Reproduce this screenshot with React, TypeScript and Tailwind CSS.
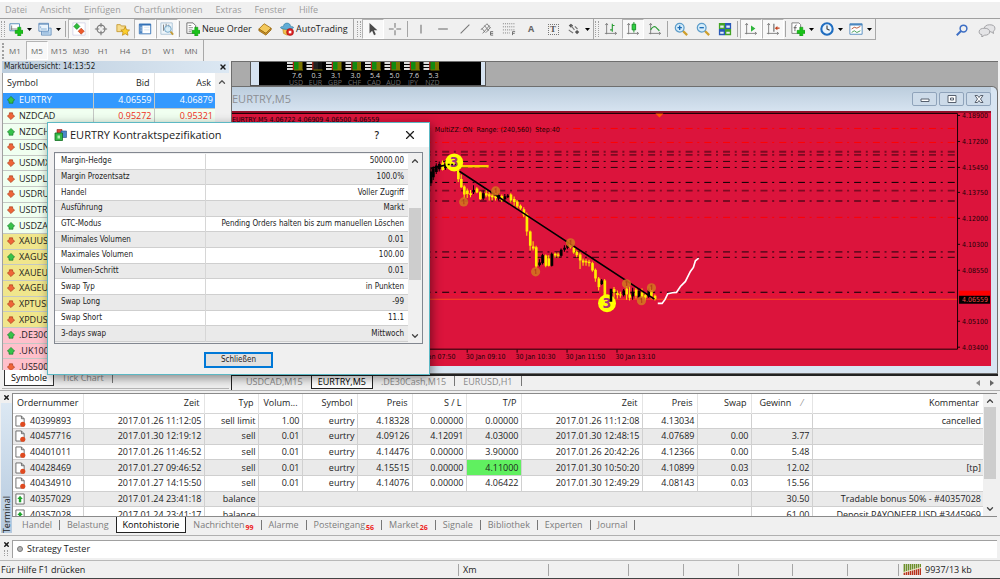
import type { ReactNode } from "react";
import clsx from "clsx";
import { ChevronDown, ChevronUp, X } from "lucide-react";

const menuItems = ["Datei", "Ansicht", "Einfügen", "Chartfunktionen", "Extras", "Fenster", "Hilfe"];

const timeframes = ["M1", "M5", "M15", "M30", "H1", "H4", "D1", "W1", "MN"];

type Quote = { symbol: string; up: boolean; bid?: string; ask?: string; tone: string };

const quotes: Quote[] = [
  { symbol: "EURTRY", up: true, bid: "4.06559", ask: "4.06879", tone: "bg-[#3399ff] text-white" },
  { symbol: "NZDCAD", up: false, bid: "0.95272", ask: "0.95321", tone: "bg-[#f0fff0]" },
  { symbol: "NZDCHF", up: true, tone: "bg-[#f0fff0]" },
  { symbol: "USDCNH", up: false, tone: "bg-[#f0fff0]" },
  { symbol: "USDMXN", up: false, tone: "bg-[#f0fff0]" },
  { symbol: "USDPLN", up: false, tone: "bg-[#f0fff0]" },
  { symbol: "USDRUB", up: false, tone: "bg-[#f0fff0]" },
  { symbol: "USDTRY", up: false, tone: "bg-[#f0fff0]" },
  { symbol: "USDZAR", up: true, tone: "bg-[#f0fff0]" },
  { symbol: "XAUUSD", up: false, tone: "bg-[#f0e68c]" },
  { symbol: "XAGUSD", up: true, tone: "bg-[#f0e68c]" },
  { symbol: "XAUEUR", up: false, tone: "bg-[#f0e68c]" },
  { symbol: "XAGEUR", up: false, tone: "bg-[#f0e68c]" },
  { symbol: "XPTUSD", up: false, tone: "bg-[#f0e68c]" },
  { symbol: "XPDUSD", up: false, tone: "bg-[#f0e68c]" },
  { symbol: ".DE30Cash", up: true, tone: "bg-[#ffc0cb]" },
  { symbol: ".UK100Cash", up: true, tone: "bg-[#ffc0cb]" },
  { symbol: ".US500Cash", up: false, tone: "bg-[#ffc0cb]" },
];

const specs: [string, string][] = [
  ["Margin-Hedge", "50000.00"],
  ["Margin Prozentsatz", "100.0%"],
  ["Handel", "Voller Zugriff"],
  ["Ausführung", "Markt"],
  ["GTC-Modus", "Pending Orders halten bis zum manuellen Löschen"],
  ["Minimales Volumen", "0.01"],
  ["Maximales Volumen", "100.00"],
  ["Volumen-Schritt", "0.01"],
  ["Swap Typ", "in Punkten"],
  ["Swap Long", "-99"],
  ["Swap Short", "11.1"],
  ["3-days swap", "Mittwoch"],
];

const orders = [
  ["40399893", "2017.01.26 11:12:05", "sell limit", "1.00", "eurtry", "4.18328", "0.00000", "0.00000", "2017.01.26 11:12:08", "4.13034", "", "", "cancelled"],
  ["40457716", "2017.01.30 12:19:12", "sell", "0.01", "eurtry", "4.09126", "4.12091", "4.03000", "2017.01.30 12:48:15", "4.07689", "0.00", "3.77", ""],
  ["40401011", "2017.01.26 11:46:52", "sell", "0.01", "eurtry", "4.14476", "0.00000", "3.90000", "2017.01.26 20:42:26", "4.12366", "0.00", "5.48", ""],
  ["40428469", "2017.01.27 09:46:52", "sell", "0.01", "eurtry", "4.15515", "0.00000", "4.11000", "2017.01.30 10:50:20", "4.10899", "0.03", "12.02", "[tp]"],
  ["40434910", "2017.01.27 14:15:50", "sell", "0.01", "eurtry", "4.14076", "0.00000", "4.06422", "2017.01.30 12:49:29", "4.08143", "0.03", "15.56", ""],
];

const balances = [
  ["40357029", "2017.01.24 23:41:18", "30.50", "Tradable bonus 50% - #40357028"],
  ["40357028", "2017.01.24 23:41:17", "61.00", "Deposit PAYONEER USD #3445969"],
];

const orderColumns = [
  { title: "Ordernummer", width: "w-[70px]", align: "text-left" },
  { title: "Zeit", width: "w-[121px]", align: "text-right" },
  { title: "Typ", width: "w-[54px]", align: "text-right" },
  { title: "Volum...", width: "w-[44px]", align: "text-right" },
  { title: "Symbol", width: "w-[55px]", align: "text-right" },
  { title: "Preis", width: "w-[55px]", align: "text-right" },
  { title: "S / L", width: "w-[54px]", align: "text-right" },
  { title: "T/P", width: "w-[55px]", align: "text-right" },
  { title: "Zeit", width: "w-[121px]", align: "text-right" },
  { title: "Preis", width: "w-[55px]", align: "text-right" },
  { title: "Swap", width: "w-[54px]", align: "text-right" },
  { title: "Gewinn", width: "w-[61px]", align: "text-left" },
  { title: "Kommentar", width: "w-auto", align: "text-right" },
];

const terminalTabs = [
  { label: "Handel" },
  { label: "Belastung" },
  { label: "Kontohistorie" },
  { label: "Nachrichten", count: "99" },
  { label: "Alarme" },
  { label: "Posteingang", count: "56" },
  { label: "Market", count: "26" },
  { label: "Signale" },
  { label: "Bibliothek" },
  { label: "Experten" },
  { label: "Journal" },
];

const strengths: [string, string][] = [
  ["7.6", "USD"],
  ["0.3", "EUR"],
  ["3.1", "GBP"],
  ["3.0", "CHF"],
  ["5.4", "CAD"],
  ["5.0", "AUD"],
  ["7.6", "JPY"],
  ["5.3", "NZD"],
];

const priceLabels: [string, number][] = [
  ["4.18900", 115],
  ["4.17200", 141],
  ["4.15450", 167],
  ["4.13750", 192],
  ["4.12000", 218],
  ["4.10300", 244],
  ["4.08550", 270],
  ["4.05100", 321],
  ["4.03400", 347],
];

// y, colour, thickness
const levels: [number, string, number][] = [
  [128.5, "#ff0000", 1],
  [142.5, "#ff0000", 1],
  [151.8, "#7d0a22", 1.8],
  [154.9, "#7d0a22", 1.8],
  [161.5, "#2a040b", 1],
  [167.5, "#2a040b", 1],
  [182.5, "#000000", 1],
  [190.8, "#7d0a22", 1.8],
  [201.1, "#55071a", 1.4],
  [217.5, "#ff0000", 1],
  [252, "#6b0920", 1.7],
  [257.5, "#2a040b", 1],
  [292.5, "#000000", 1],
];

// x, high, low, body top, body bottom, bullish
const candles: [number, number, number, number, number, boolean][] = [
  [0, 205, 258, 215, 250, true],
  [7, 200, 240, 206, 232, true],
  [16, 190, 222, 197, 216, true],
  [25, 185, 215, 192, 208, true],
  [35, 182, 212, 188, 210, false],
  [44, 180, 210, 190, 204, true],
  [53, 178, 205, 188, 200, false],
  [62, 176, 204, 186, 198, true],
  [82, 205, 246, 212, 238, false],
  [91, 224, 264, 237, 262, false],
  [100, 256, 310, 260, 284, false],
  [109, 266, 294, 272, 282, false],
  [119, 270, 292, 280, 285, false],
  [128, 256, 282, 270, 277, true],
  [138, 262, 280, 266, 278, false],
  [148, 274, 300, 277, 297, false],
  [157, 272, 300, 280, 296, true],
  [166, 268, 292, 280, 287, false],
  [175, 276, 302, 283, 290, false],
  [184, 278, 302, 287, 292, false],
  [194, 268, 302, 288, 295, false],
  [203, 280, 302, 285, 296, true],
  [213, 284, 306, 288, 302, false],
  [222, 282, 305, 289, 298, true],
  [231, 282, 294, 287, 292, true],
  [240, 280, 308, 284, 302, false],
  [250, 290, 318, 297, 306, false],
  [259, 300, 326, 305, 320, false],
  [269, 314, 330, 318, 326, false],
  [279, 322, 352, 328, 346, false],
  [288, 338, 408, 343, 395, false],
  [298, 392, 452, 395, 438, false],
  [307, 424, 452, 440, 446, false],
  [316, 438, 518, 442, 500, false],
  [326, 478, 500, 488, 496, true],
  [335, 462, 494, 466, 490, true],
  [345, 464, 502, 467, 498, false],
  [354, 466, 500, 476, 498, false],
  [363, 458, 500, 462, 498, true],
  [373, 458, 474, 462, 467, false],
  [382, 458, 474, 464, 468, false],
  [391, 446, 472, 450, 468, true],
  [401, 436, 456, 444, 450, true],
  [410, 430, 448, 436, 444, true],
  [419, 426, 446, 430, 442, false],
  [429, 440, 462, 444, 458, false],
  [438, 452, 472, 456, 466, false],
  [448, 458, 508, 464, 482, false],
  [457, 476, 498, 482, 488, false],
  [466, 478, 498, 484, 488, false],
  [475, 480, 500, 486, 490, false],
  [485, 486, 516, 490, 512, false],
  [494, 506, 546, 510, 536, false],
  [504, 532, 572, 536, 562, false],
  [513, 538, 556, 542, 553, true],
  [522, 538, 602, 542, 592, false],
  [550, 562, 594, 568, 578, false],
  [560, 572, 596, 580, 586, false],
  [569, 576, 594, 584, 587, false],
  [579, 568, 590, 572, 586, true],
  [588, 556, 600, 566, 584, false],
  [597, 560, 602, 584, 594, false],
  [606, 564, 600, 576, 590, true],
  [616, 564, 596, 570, 588, false],
  [625, 566, 600, 574, 594, true],
  [634, 566, 604, 578, 598, false],
  [644, 580, 602, 586, 594, false],
  [654, 566, 594, 572, 590, true],
  [662, 560, 596, 568, 590, false],
  [673, 584, 602, 588, 598, false],
];

const swings: [number, number][] = [
  [463, 202],
  [495, 191],
  [535, 272],
  [570, 243],
  [626, 284],
  [641, 301],
  [651, 288],
];

function Caret() {
  return (
    <svg viewBox="0 0 5 3" className="h-[3px] w-[5px] shrink-0" aria-hidden="true">
      <path d="M0 0h5L2.5 3z" />
    </svg>
  );
}

function Icon({ children }: { children: ReactNode }) {
  return (
    <svg viewBox="0 0 16 16" className="size-3.5 shrink-0" fill="none" aria-hidden="true">
      {children}
    </svg>
  );
}

function GreenPlus() {
  return <path d="M10 6h3.5v3.500H16V13h-2.500v3H10v-3H7V9.500h3z" fill="#19c219" stroke="#0b8d0b" strokeWidth=".6" />;
}

function Axes() {
  return <path d="M3 2v12M1 13h13M1.500 3.500 3 1.500l1.500 2M12.500 11.500l2 1.500-2 1.500" stroke="#777" />;
}

const icons = {
  newChart: (
    <Icon>
      <path d="M1 2h11v8H1z" fill="#fff" stroke="#4a86b5" />
      <path d="M3 4v5M2 8h8" stroke="#777" />
      <GreenPlus />
    </Icon>
  ),
  profiles: (
    <Icon>
      <path d="M4 7h11v8H4z" fill="#c4dcf2" stroke="#6a92bd" />
      <path d="M1 1.500h11v9H1z" fill="#eaf4fc" stroke="#5b88b8" />
      <path d="M1 2.500h11" stroke="#5b88b8" />
      <path d="M3 8h7M5 12.500h8M3 5v2" stroke="#7fa8d0" />
    </Icon>
  ),
  market: (
    <Icon>
      <path d="M1 1h14v14H1z" fill="#fff" stroke="#bbd" strokeWidth=".6" />
      <path d="M5.500 1.500 9 5 5.500 8.500 2 5z" fill="#2ebd3a" stroke="#14761c" strokeWidth=".6" />
      <path d="M10.500 7 14 10.500 10.500 14 7 10.500z" fill="#ee5a2c" stroke="#a8320e" strokeWidth=".6" />
    </Icon>
  ),
  target: (
    <Icon>
      <circle cx="8" cy="8" r="4.500" stroke="#777" strokeWidth="1.300" />
      <path d="M8 1v5M8 10v5M1 8h5M10 8h5" stroke="#777" strokeWidth="1.200" />
    </Icon>
  ),
  navigator: (
    <Icon>
      <path d="M1 3h4l1 1.500h5V11H1z" fill="#f7dc8c" stroke="#c69a32" />
      <path
        d="m10.500 5.500 1.600 3.300 3.400.4-2.500 2.400.7 3.600-3.200-1.800-3.200 1.800.7-3.600-2.500-2.400 3.400-.4z"
        fill="#fccf2e"
        stroke="#b98412"
        strokeWidth=".8"
      />
    </Icon>
  ),
  terminal: (
    <Icon>
      <path d="M1.500 2.500h13v11h-13z" fill="#fff" stroke="#2f6eb5" />
      <path d="M1.500 3h13" stroke="#2f6eb5" strokeWidth="2" />
      <path d="M2 3h3v10H2z" fill="#4d86c4" />
      <path d="M3 6h1M3 8h1M3 10h1" stroke="#fff" />
      <path d="M7 6h6M7 9h6" stroke="#d6e2ee" />
    </Icon>
  ),
  tester: (
    <Icon>
      <path d="M1 1h13v13H1z" fill="#eef5fa" stroke="#a9c2d6" />
      <path d="M4 3v7M7 2v5M10 3v4" stroke="#777" />
      <circle cx="9" cy="8" r="3.800" fill="#d5edf9" fillOpacity=".8" stroke="#6a9fc4" />
      <path d="m12 11 3 3.500" stroke="#c59b35" strokeWidth="2" />
    </Icon>
  ),
  order: (
    <Icon>
      <path d="M1 1h7l3 3v9H1z" fill="#fff" stroke="#666" />
      <path d="M3 4h3M3 6.500h5M3 9h4M3 11h3" stroke="#888" />
      <GreenPlus />
    </Icon>
  ),
  book: (
    <Icon>
      <path d="M1 8 7 2l8 5-6 6z" fill="#f3c95c" stroke="#a87415" />
      <path d="M1 8v2l8 5 6-6V7l-6 6z" fill="#cf9526" stroke="#8b5f10" strokeWidth=".8" />
    </Icon>
  ),
  auto: (
    <Icon>
      <path d="M3 7h10l-1 6-4 2-4-2z" fill="#f3c24e" stroke="#b98a21" strokeWidth=".7" />
      <path d="M4 5c0-5 8-5 8 0 3 0 4 1 3 2-4 2-10 2-14 0-1-1 0-2 3-2z" fill="#61add6" stroke="#2b789f" strokeWidth=".7" />
      <circle cx="11.500" cy="11.500" r="4" fill="#dc2020" stroke="#9a0d0d" strokeWidth=".6" />
      <path d="M10 10h3v3h-3z" fill="#fff" />
    </Icon>
  ),
  cursor: (
    <Icon>
      <path d="M4 1v12l3-3 2.200 5 2-1L9 9.500h4z" fill="#4a4a4a" />
    </Icon>
  ),
  cross: (
    <Icon>
      <path d="M8 1v5.500M8 9.500V15M1 8h5.500M9.500 8H15" stroke="#777" strokeWidth="1.200" />
    </Icon>
  ),
  vertical: (
    <Icon>
      <path d="M8 3v10" stroke="#777" strokeWidth="1.300" />
    </Icon>
  ),
  horizontal: (
    <Icon>
      <path d="M2.500 8h11" stroke="#777" strokeWidth="1.300" />
    </Icon>
  ),
  trend: (
    <Icon>
      <path d="M3 13 13 3" stroke="#777" strokeWidth="1.300" />
    </Icon>
  ),
  channel: (
    <Icon>
      <path d="m1 9 7-7M3 13l8-9M7 12l5-6M2 7l4 5M5 4l5 6M8 2l4 5" stroke="#777" />
      <path d="M15 11h-3v4h3M12 13h3" stroke="#666" />
    </Icon>
  ),
  fibo: (
    <Icon>
      <path d="M1 2h14M1 5.500h14M1 9h14M1 12.500h8" stroke="#777" strokeDasharray="1.200 1.200" />
      <path d="M12 15v-4h3M12 13h2.500" stroke="#666" />
    </Icon>
  ),
  arrows: (
    <Icon>
      <path d="m2 4 2.500-2L7 4 4.500 6.500zM9 11.500l2.500-2.500 2.500 2.500-2.500 2.500z" fill="#555" />
      <path d="m4.500 4 4 5M9 5l3 3M2 9l2 1.500 3 2" stroke="#777" strokeWidth="1.300" />
    </Icon>
  ),
  bars: (
    <Icon>
      <Axes />
      <path d="M9.500 2v9M9.500 4H12M7 9h2.500" stroke="#2a9c35" strokeWidth="1.300" />
    </Icon>
  ),
  candle: (
    <Icon>
      <Axes />
      <path d="M9 0v12" stroke="#128d20" />
      <path d="M7 2.500h4V9H7z" fill="#2fd042" stroke="#128d20" />
    </Icon>
  ),
  line: (
    <Icon>
      <Axes />
      <path d="M3 9c2-4 5-5 7-2l3 3" stroke="#2a9c35" strokeWidth="1.300" />
    </Icon>
  ),
  zoomIn: (
    <Icon>
      <path d="m10 10 5 5" stroke="#cf9f2c" strokeWidth="2.600" />
      <circle cx="6.500" cy="6.500" r="5" fill="#d4ecfa" stroke="#5c9cc9" strokeWidth="1.400" />
      <path d="M6.500 4v5M4 6.500h5" stroke="#1c6bb5" strokeWidth="1.500" />
    </Icon>
  ),
  zoomOut: (
    <Icon>
      <path d="m10 10 5 5" stroke="#cf9f2c" strokeWidth="2.600" />
      <circle cx="6.500" cy="6.500" r="5" fill="#d4ecfa" stroke="#5c9cc9" strokeWidth="1.400" />
      <path d="M4 6.500h5" stroke="#1c6bb5" strokeWidth="1.500" />
    </Icon>
  ),
  tiles: (
    <Icon>
      <path d="M1 1h7v7H1zM8 8h7v7H8z" fill="#44a325" />
      <path d="M8 1h7v7H8zM1 8h7v7H1z" fill="#2859b8" />
      <path d="M2.500 4h4v2.500h-4zM9.500 4h4v2.500h-4zM2.500 11h4v2.500h-4zM9.500 11h4v2.500h-4z" fill="#e6eef8" />
    </Icon>
  ),
  scroll: (
    <Icon>
      <Axes />
      <path d="M8 4v7l5-3.500z" fill="#2fb53c" />
    </Icon>
  ),
  shift: (
    <Icon>
      <Axes />
      <path d="M9 2v9" stroke="#666" strokeWidth="1.300" />
      <path d="m10 7 3-2.500v1.800h2.500v1.400H13v1.800z" fill="#c5401b" />
    </Icon>
  ),
  indicators: (
    <Icon>
      <path d="M1 1h8l2 2v10H1z" fill="#fff" stroke="#777" />
      <path d="M6.500 3.500c-2 0-2 1-2 7M3 6.500h3.500" stroke="#555" />
      <GreenPlus />
    </Icon>
  ),
  clock: (
    <Icon>
      <circle cx="8" cy="8" r="6.500" fill="#e9f4fd" stroke="#1f6dc0" strokeWidth="2.400" />
      <path d="M8 4v4l3 1.500" stroke="#333" strokeWidth="1.200" />
    </Icon>
  ),
  templates: (
    <Icon>
      <path d="M1 2h14v12H1z" fill="#fff" stroke="#4b87be" />
      <path d="M1 3h14" stroke="#4b87be" strokeWidth="2" />
      <path d="m3 8 3-2 3 1 4-2" stroke="#b34a2a" />
      <path d="m3 12 3-2 3 2 4-2" stroke="#319243" />
    </Icon>
  ),
};

type ToolProps = { label: string; icon: ReactNode; pressed?: boolean; menu?: boolean };

function Tool({ label, icon, pressed, menu }: ToolProps) {
  return (
    <button
      type="button"
      aria-label={label}
      aria-pressed={pressed}
      className={clsx(
        "flex h-5 shrink-0 items-center justify-center gap-1",
        menu ? "w-[29px]" : "w-[22px]",
        pressed && "border border-[#b4b4b4] border-r-white border-b-white bg-[#f8f8f8]",
      )}
    >
      {icon}
      {menu && <Caret />}
    </button>
  );
}

function Grip() {
  return <span className="mx-px h-4 w-1 shrink-0 border-x border-dotted border-[#a0a0a0]" />;
}

function Divider() {
  return <span className="mr-0.5 ml-px h-4 w-px shrink-0 bg-[#a5a5a5]" />;
}

function Toolbar() {
  return (
    <div className="flex h-[22px] items-center border-t border-[#a0a0a0]">
      <div className="flex h-full items-center border-r border-b border-[#a8a8a8]">
        <Grip />
        <Tool label="Neuer Chart" icon={icons.newChart} menu />
        <Tool label="Profile" icon={icons.profiles} menu />
        <Divider />
        <Tool label="Marktübersicht" icon={icons.market} pressed />
        <Tool label="Datenfenster" icon={icons.target} />
        <Tool label="Navigator" icon={icons.navigator} />
        <Tool label="Terminal" icon={icons.terminal} pressed />
        <Tool label="Strategy Tester" icon={icons.tester} pressed />
        <Divider />
        <button type="button" className="flex h-5 w-[72px] items-center gap-0.5 pl-1 whitespace-nowrap">
          {icons.order}
          Neue Order
        </button>
        <Tool label="MetaEditor" icon={icons.book} />
        <button type="button" className="flex h-5 w-[77px] items-center gap-0.5 pl-1 whitespace-nowrap">
          {icons.auto}
          AutoTrading
        </button>
      </div>
      <div className="flex h-full items-center border-r border-b border-[#a8a8a8] pl-0.5">
        <Grip />
        <Tool label="Cursor" icon={icons.cursor} pressed />
        <Tool label="Fadenkreuz" icon={icons.cross} />
        <Divider />
        <Tool label="Vertikale Linie" icon={icons.vertical} />
        <Tool label="Horizontale Linie" icon={icons.horizontal} />
        <Tool label="Trendlinie" icon={icons.trend} />
        <Tool label="Kanal" icon={icons.channel} />
        <Tool label="Fibonacci" icon={icons.fibo} />
        <Tool label="Text" icon={<span className="text-[9px] font-bold text-[#666]">A</span>} />
        <Tool
          label="Textlabel"
          icon={
            <span className="flex size-[11px] items-center justify-center border border-dotted border-[#777] font-['Liberation_Serif',serif] text-[9px] font-bold text-[#555]">
              T
            </span>
          }
        />
        <Tool label="Pfeile" icon={icons.arrows} menu />
      </div>
      <div className="flex h-full items-center border-r border-b border-[#a8a8a8]">
        <Grip />
        <Tool label="Balkenchart" icon={icons.bars} />
        <Tool label="Kerzenchart" icon={icons.candle} pressed />
        <Tool label="Linienchart" icon={icons.line} />
        <Divider />
        <Tool label="Vergrößern" icon={icons.zoomIn} />
        <Tool label="Verkleinern" icon={icons.zoomOut} />
        <Tool label="Fenster anordnen" icon={icons.tiles} />
        <Divider />
        <Tool label="Automatischer Bildlauf" icon={icons.scroll} pressed />
        <Tool label="Chartverschiebung" icon={icons.shift} pressed />
        <Divider />
        <Tool label="Indikatoren" icon={icons.indicators} menu />
        <Tool label="Zeitrahmen" icon={icons.clock} menu />
        <Tool label="Vorlagen" icon={icons.templates} menu />
      </div>
      <div className="ml-auto flex items-center gap-2.5 pr-1">
        <button type="button" aria-label="Suchen">
          <svg viewBox="0 0 16 16" className="size-3" fill="none" aria-hidden="true">
            <circle cx="10" cy="6" r="4.500" stroke="#3e6fc4" strokeWidth="2" />
            <path d="m7 9-6 6" stroke="#3e6fc4" strokeWidth="2.500" />
          </svg>
        </button>
        <button type="button" aria-label="Chat">
          <svg viewBox="0 0 20 16" className="h-3.5 w-[18px]" fill="#e4e4e6" stroke="#9a9a9e" aria-hidden="true">
            <path d="M13 2c4 0 6 1.500 6 4s-1 3-2 3.500l.5 2.500-3-2H11C8 10 7 8 7 6s2-4 6-4z" />
            <path d="M7 6c4 0 6 1.500 6 4s-2 4-6 4l-3 2 .3-2.500C2 13 1 12 1 10c0-3 3-4 6-4z" />
          </svg>
        </button>
      </div>
    </div>
  );
}

function TrendMark({ up }: { up: boolean }) {
  return (
    <svg viewBox="0 0 10 10" className="size-2 shrink-0" aria-hidden="true">
      {up ? (
        <path d="M5 .5 9.500 5 7.500 6.500V9h-5V6.500L.5 5z" fill="#36c24a" stroke="#157426" strokeWidth=".8" />
      ) : (
        <path d="M5 9.500.5 5 3 3V1h4v2l2.500 2z" fill="#ef6438" stroke="#a13413" strokeWidth=".8" />
      )}
    </svg>
  );
}

function MarketWatch() {
  return (
    <aside className="flex w-[231px] shrink-0 flex-col pr-0.5 pl-0.5">
      <div className="flex h-3 items-center justify-between bg-gradient-to-r from-[#bccddd] to-[#dce8f3] px-0.5 font-['DejaVu_Sans_Condensed','Open_Sans',sans-serif] text-[8px]">
        <h2>Marktübersicht: 14:13:52</h2>
        <button type="button" aria-label="Marktübersicht schließen">
          <X className="size-2" strokeWidth={4} />
        </button>
      </div>
      <div className="flex h-[297px] overflow-hidden border-l border-[#a0a0a0]">
        <div className="flex-1">
          <table className="h-[302px] w-full table-fixed border-collapse">
            <thead>
              <tr className="h-5 bg-white">
                <th className="w-[90px] border-r border-[#e4e4e4] pl-1 text-left font-normal">Symbol</th>
                <th className="border-r border-[#e4e4e4] pr-1 text-right font-normal">Bid</th>
                <th className="pr-1 text-right font-normal">Ask</th>
              </tr>
            </thead>
            <tbody>
              {quotes.map((q) => (
                <tr key={q.symbol} className={clsx("border-b border-[#c4c8c4]", q.tone)}>
                  <td className="border-r border-[#c4c8c4] p-0 pl-1">
                    <span className="flex items-center gap-1">
                      <TrendMark up={q.up} />
                      {q.symbol}
                    </span>
                  </td>
                  <td className={clsx("border-r border-[#c4c8c4] p-0 pr-0.5 text-right", q.symbol !== "EURTRY" && "text-[#f03020]")}>
                    {q.bid}
                  </td>
                  <td className={clsx("p-0 pr-0.5 text-right", q.symbol !== "EURTRY" && "text-[#f03020]")}>{q.ask}</td>
                </tr>
              ))}
            </tbody>
          </table>
        </div>
        <div className="flex w-3.5 flex-col items-center bg-[#f0f0f0] pt-1">
          <ChevronUp className="size-2.5 text-[#555]" strokeWidth={3} />
        </div>
      </div>
      <div className="flex h-4 items-center pl-0.5 text-[#8a8a8a]" role="tablist">
        <button type="button" role="tab" aria-selected className="h-full border border-t-0 border-[#333] bg-white px-1.5 text-black">
          Symbole
        </button>
        <button type="button" role="tab" className="px-2">
          Tick Chart
        </button>
        <span className="h-2.5 w-px bg-[#777]" />
      </div>
      <div className="h-[3px] border-b border-[#b5b5b5]" />
    </aside>
  );
}

function StrengthMeter() {
  return (
    <div className="flex h-6 w-[236px] border-x border-b border-[#555] bg-[#d6e3f1] pr-1 pl-2">
      <svg viewBox="258 61 222 23" className="h-full w-full bg-black" preserveAspectRatio="xMinYMin meet" aria-hidden="true">
        {strengths.map(([value, currency], i) => (
          <g key={currency} transform={`translate(${286 + i * 19.5} 61)`}>
            <path d="M3 0v8" stroke="#ddd" strokeWidth="6" strokeDasharray="2 1" />
            <path d="M6.500 0v8" stroke="#b02010" strokeWidth="1.500" />
            <path d="M9.500 0v8" stroke={i === 1 ? "#222" : "#118a11"} strokeWidth="5" />
            <path d="M13.500 0v8" stroke={i === 1 ? "#111" : "#7c7400"} strokeWidth="4" />
            <path d="M7 8h9" stroke="#7c7400" />
            <text x="10" y="15.500" textAnchor="middle" fontSize="7" fill="#d8d8d8">
              {value}
            </text>
            <text x="9" y="22.500" textAnchor="middle" fontSize="7" fill="#6a6a6a">
              {currency}
            </text>
          </g>
        ))}
      </svg>
    </div>
  );
}

function PriceChart() {
  return (
    <svg
      viewBox="231 111 760 255"
      className="h-[255px] w-full bg-[#dc143c] font-['DejaVu_Sans_Condensed','Open_Sans',sans-serif]"
      preserveAspectRatio="xMaxYMin meet"
      fontSize="7"
      role="img"
      aria-label="EURTRY M5 Chart"
    >
      <path d="M231 112h760" stroke="#7a0c20" strokeWidth="1.500" />
      <path d="M231 113.500h726.500V349.500H231" fill="none" stroke="#1a0206" />
      <text x="231" y="122" fill="#1a0206">
        EURTRY,M5 4.06722 4.06909 4.06500 4.06559
      </text>
      <path d="M655 113.500h8l-4 4z" fill="#ff5a00" />

      {levels.map(([y, color, thickness]) => (
        <path key={y} d={`M235.200 ${y}H956`} stroke={color} strokeWidth={thickness} strokeDasharray="7 4.700 2 5.050" />
      ))}
      <path d="M231 299.500h726" stroke="#ff4a1c" />
      <path d="M231 295h726" stroke="#ee1030" />
      <text x="434" y="132" fill="#1a0206">
        {"MultiZZ: ON\u00a0 Range: (240,560)\u00a0 Step:40"}
      </text>

      <g transform="translate(430 100) scale(.33333)">
        {candles.map(([x, high, low, top, bottom, bullish]) => (
          <g key={x} fill={bullish ? "#000" : "#ffee00"}>
            <path d={`M${x - 1} ${high}h3v${low - high}h-3z`} />
            <path d={`M${x - 3} ${top}h8v${bottom - top}h-8z`} />
          </g>
        ))}
        <path d="M0 205 62 192M86 214 672 598" stroke="#000" strokeWidth="5" />
        <path d="M92 199h82" stroke="#ffcc00" strokeWidth="8" />
        <path
          d="M682 611h13l9-12 8-17 14-3 12-1 12-18 15-15 6-12 9-18 9-12 6-20 10-8"
          fill="none"
          stroke="#fff"
          strokeWidth="5"
        />
      </g>

      {swings.map(([x, y]) => (
        <g key={x}>
          <circle cx={x} cy={y} r="4.600" fill="#d2791e" fillOpacity=".85" />
          <path d={`M${x - 1} ${y - 1.5}l1.200-.8v4.600`} fill="none" stroke="#b8421c" strokeWidth="1.200" />
        </g>
      ))}
      {[
        [453.5, 162.5],
        [606.5, 303.5],
      ].map(([x, y]) => (
        <g key={x}>
          <circle cx={x} cy={y} r="9" fill="#ffff00" />
          <text x={x} y={y + 5} textAnchor="middle" fontSize="14" fontWeight="bold" fill="#a8327c">
            3
          </text>
        </g>
      ))}
      <path d="M447 164.500h8" stroke="#000" strokeWidth="1.500" strokeDasharray="2 1.500" />
      <path d="M610.500 289v13" stroke="#000" strokeWidth="2.500" />

      {priceLabels.map(([label, y]) => (
        <g key={label}>
          <path d={`M957 ${y + 0.5}h3`} stroke="#1a0206" />
          <text x="962" y={y + 3} fill="#1a0206">
            {label}
          </text>
        </g>
      ))}
      <path d="M959 291h31v5h-31z" fill="#ff0000" />
      <path d="M959 296h31v8h-31z" fill="#000" />
      <text x="962" y="302.500" fill="#f04848">
        4.06559
      </text>

      {["07:50", "09:10", "10:30", "11:50", "13:10"].map((time, i) => (
        <g key={time}>
          <path d={`M${416.5 + i * 50} 350v3`} stroke="#1a0206" />
          <text x={415 + i * 50} y="359" fill="#1a0206">
            30 Jan {time}
          </text>
        </g>
      ))}
    </svg>
  );
}

function WindowButton({ label, children }: { label: string; children: ReactNode }) {
  return (
    <button
      type="button"
      aria-label={label}
      className="flex h-3.5 w-[25px] items-center justify-center rounded-[2px] border border-[#8fa3ba] bg-[#cddbe9]"
    >
      <svg viewBox="0 0 10 8" className="h-2 w-2.5" fill="#fff" stroke="#57606e" aria-hidden="true">
        {children}
      </svg>
    </button>
  );
}

function ChartArea() {
  return (
    <main className="flex min-w-0 flex-1 flex-col pr-0.5">
      <div className="flex flex-col border-t border-l border-[#6e6e6e] bg-[#ababab]">
        <div className="pl-[18px]">
          <StrengthMeter />
        </div>
        <section className="overflow-hidden rounded-tr-md border-t border-r border-b border-[#6e6e6e] bg-[#d8e5f2] pr-1.5 pb-[7px]">
          <header className="flex h-6 items-center justify-between bg-gradient-to-b from-[#bccddd] to-[#d6e3f0]">
            <h1 className="text-[11px] text-[#8c8f94]">EURTRY,M5</h1>
            <div className="flex gap-0.5">
              <WindowButton label="Minimieren">
                <path d="M1 4h8v2.500H1z" />
              </WindowButton>
              <WindowButton label="Maximieren">
                <path d="M1 .5h8v7H1zM3.500 3h3v2h-3z" />
              </WindowButton>
              <WindowButton label="Schließen">
                <path d="M1 .5h2.500L5 2.500 6.500.5H9L6.500 4 9 7.500H6.500L5 5.500 3.500 7.500H1L3.500 4z" />
              </WindowButton>
            </div>
          </header>
          <PriceChart />
        </section>
      </div>
      <div className="flex h-4 items-start border-t-2 border-l border-[#222] pl-1.5 text-[#8a8a8a]" role="tablist">
        <button type="button" role="tab" className="px-2">
          USDCAD,M15
        </button>
        <button type="button" role="tab" aria-selected className="h-[13px] border border-t-0 border-[#222] bg-white px-1.5 text-black">
          EURTRY,M5
        </button>
        <button type="button" role="tab" className="px-2">
          .DE30Cash,M15
        </button>
        <span className="h-2.5 w-px bg-[#777]" />
        <button type="button" role="tab" className="px-2">
          EURUSD,H1
        </button>
        <span className="h-2.5 w-px bg-[#777]" />
        <span className="mt-1 ml-auto flex gap-2.5 pr-1">
          <button type="button" aria-label="Tabs nach links">
            <svg viewBox="0 0 4 6" className="h-1.5 w-1" fill="#888" aria-hidden="true">
              <path d="M4 0v6L0 3z" />
            </svg>
          </button>
          <button type="button" aria-label="Tabs nach rechts">
            <svg viewBox="0 0 4 6" className="h-1.5 w-1" fill="#666" aria-hidden="true">
              <path d="M0 0v6l4-3z" />
            </svg>
          </button>
        </span>
      </div>
    </main>
  );
}

function SpecificationDialog() {
  return (
    <div
      role="dialog"
      aria-labelledby="spec-title"
      className="absolute top-[120px] left-[47px] w-[383px] border border-[#5cb8c4] bg-[#f0f0f0] shadow-[2px_3px_10px_rgba(0,0,0,0.45)]"
    >
      <header className="flex h-6 items-center bg-white pr-3 pl-1.5">
        <svg viewBox="0 0 14 14" className="size-3.5" aria-hidden="true">
          <path d="M3 1.500h5v6H3z" fill="#d6453c" stroke="#8d2019" strokeWidth=".6" />
          <path d="M7 3h5.500v6.500H7z" fill="#4b86c9" stroke="#234f85" strokeWidth=".6" />
          <path d="M1 5h7.500v7.500H1z" fill="#35b846" stroke="#137022" strokeWidth=".8" />
          <path d="M3.500 7.500h2.500v3H3.500z" fill="#b6f0b6" />
        </svg>
        <h2 id="spec-title" className="ml-0.5 text-[11px]">
          EURTRY Kontraktspezifikation
        </h2>
        <button type="button" aria-label="Hilfe" className="mr-6 ml-auto text-[10px] font-semibold">
          ?
        </button>
        <button type="button" aria-label="Schließen">
          <X className="size-3.5" strokeWidth={2} />
        </button>
      </header>
      <div className="px-1.5 pt-[5px] pb-1.5 font-['DejaVu_Sans_Condensed','Open_Sans',sans-serif] text-[8px]">
        <div className="flex h-[192px] border border-[#828790] bg-[#f0f0f0] pt-px">
          <table className="h-[188px] flex-1 border-collapse">
            <tbody>
              {specs.map(([name, value]) => (
                <tr key={name} className="border-b border-[#cfcfcf] odd:bg-white even:bg-[#eaeaea]">
                  <th scope="row" className="w-[150px] border-r border-[#d6d6d6] p-0 pl-1.5 text-left font-normal">
                    {name}
                  </th>
                  <td className="p-0 pr-1 text-right">{value}</td>
                </tr>
              ))}
            </tbody>
          </table>
          <div className="flex w-3.5 flex-col items-center py-0.5">
            <ChevronUp className="size-2.5 text-[#444]" strokeWidth={3} />
            <div className="mt-[42px] h-[72px] w-3 bg-[#cdcdcd]" />
            <ChevronDown className="mt-auto size-2.5 text-[#444]" strokeWidth={3} />
          </div>
        </div>
        <div className="mt-2 flex justify-center">
          <button type="button" className="h-4 w-[69px] border-2 border-[#0078d7] bg-[#e1e1e1] leading-3">
            Schließen
          </button>
        </div>
      </div>
    </div>
  );
}

function OrderMark({ balance }: { balance?: boolean }) {
  return (
    <svg viewBox="0 0 12 13" className="h-3 w-[11px] shrink-0" fill="none" aria-hidden="true">
      {balance ? (
        <>
          <path d="M1 1h9v11H1z" fill="#fff" stroke="#666" />
          <path d="m5.500 3 3 3.500H6.800V10H4.200V6.500H2.500z" fill="#1fa52d" />
        </>
      ) : (
        <>
          <path d="M1 1h6l3 3v8H1zM7 1v3h3" fill="#fff" stroke="#666" />
          <circle cx="8.500" cy="10" r="2.800" fill="#df4a20" />
        </>
      )}
    </svg>
  );
}

function Terminal() {
  return (
    <section className="flex h-[146px] border-t border-b border-[#b0b0b0] pt-0.5">
      <div className="flex w-3 shrink-0 flex-col items-center pl-px">
        <button type="button" aria-label="Terminal schließen" className="pt-px pb-0.5">
          <X className="size-[7px]" strokeWidth={5} />
        </button>
        <div className="mb-0.5 flex w-full flex-1 items-center bg-gradient-to-t from-[#b5c9de] to-[#dce8f3]">
          <h2 className="flex-1 rotate-180 self-end leading-[11px] [writing-mode:vertical-rl]">Terminal</h2>
        </div>
      </div>
      <div className="flex min-w-0 flex-1 flex-col pr-[3px]">
        <div className="flex h-[124px] overflow-hidden border-t border-b border-l border-[#8a8a8a]">
          <div className="min-w-0 flex-1">
            <table className="h-[129px] w-full table-fixed border-collapse bg-white">
              <thead>
                <tr className="h-[19px] border-b border-[#d5d5d5]">
                  {orderColumns.map((col, i) => (
                    <th
                      key={i}
                      className={clsx(
                        "p-0 font-normal whitespace-nowrap",
                        col.width,
                        col.align,
                        i < 12 && "border-r border-[#e4e4e4]",
                        i === 0 ? "pl-1" : i === 11 ? "pl-2" : "pr-1",
                      )}
                    >
                      {col.title}
                      {i === 11 && <span className="ml-2.5 text-[#888]">⁄</span>}
                    </th>
                  ))}
                </tr>
              </thead>
              <tbody>
                {orders.map((order) => (
                  <tr key={order[0]} className="border-b border-[#cfcfcf] even:bg-[#eaeaea]">
                    {order.map((cell, i) => (
                      <td
                        key={i}
                        className={clsx(
                          "p-0 text-right whitespace-nowrap",
                          i < 12 && "border-r border-[#d0d0d0]",
                          i === 0 ? "pl-0.5" : "pr-0.5",
                          cell === "4.11000" && "bg-[#60f060]",
                        )}
                      >
                        {i === 0 ? (
                          <span className="flex items-center gap-1">
                            <OrderMark />
                            {cell}
                          </span>
                        ) : (
                          cell
                        )}
                      </td>
                    ))}
                  </tr>
                ))}
                {balances.map(([id, time, profit, comment]) => (
                  <tr key={id} className="border-b border-[#cfcfcf] even:bg-[#eaeaea]">
                    <td className="border-r border-[#d0d0d0] p-0 pl-0.5">
                      <span className="flex items-center gap-1">
                        <OrderMark balance />
                        {id}
                      </span>
                    </td>
                    <td className="border-r border-[#d0d0d0] p-0 pr-0.5 text-right">{time}</td>
                    <td className="border-r border-[#d0d0d0] p-0 pr-0.5 text-right">balance</td>
                    <td colSpan={8} className="border-r border-[#d0d0d0] p-0" />
                    <td className="border-r border-[#d0d0d0] p-0 pr-0.5 text-right">{profit}</td>
                    <td className="p-0 pr-0.5 text-right whitespace-nowrap">{comment}</td>
                  </tr>
                ))}
              </tbody>
            </table>
          </div>
          <div className="flex w-3.5 flex-col items-center py-0.5">
            <ChevronUp className="size-2.5 shrink-0 text-[#444]" strokeWidth={3} />
            <div className="mt-px h-[72px] w-3 shrink-0 bg-[#cdcdcd]" />
            <ChevronDown className="mt-auto size-2.5 shrink-0 text-[#444]" strokeWidth={3} />
          </div>
        </div>
        <div className="flex h-4 items-center pl-[3px] text-[#7c7c7c]" role="tablist">
          {terminalTabs.map((tab, i) => {
            const active = tab.label === "Kontohistorie";
            return (
              <div key={tab.label} className="flex h-full items-center">
                <button
                  type="button"
                  role="tab"
                  aria-selected={active}
                  className={clsx(
                    "flex h-full items-center",
                    active ? "border border-t-0 border-[#222] bg-white px-1.5 text-black" : "px-[7px]",
                  )}
                >
                  {tab.label}
                  {tab.count && <span className="ml-px self-end text-[7px] leading-[10px] font-bold text-[#ee2222]">{tab.count}</span>}
                </button>
                {i !== 1 && i !== 2 && <span className="h-2.5 w-px bg-[#777]" />}
              </div>
            );
          })}
        </div>
      </div>
    </section>
  );
}

export default function App() {
  return (
    <div className="relative flex min-h-screen flex-col overflow-hidden border-t-2 border-white bg-[#f0f0f0] font-['Open_Sans','Noto_Sans',sans-serif] text-[9px] leading-3 text-[#1c1c1c]">
      <nav className="flex h-4 items-center gap-[13px] pl-[5px] text-[#9c9c9c]">
        {menuItems.map((item) => (
          <button key={item} type="button">
            {item}
          </button>
        ))}
      </nav>
      <Toolbar />
      <div className="flex h-[21px] items-center">
        <div className="flex h-full items-center border-r border-[#a8a8a8] pr-px text-[8px] text-[#666]">
          <span className="ml-0.5 h-4 w-0.5 border-l-2 border-dotted border-[#a0a0a0]" />
          {timeframes.map((tf) => (
            <button
              key={tf}
              type="button"
              className={clsx("h-[19px] w-[22px]", tf === "M5" && "border border-[#b4b4b4] border-r-white border-b-white bg-[#f8f8f8]")}
            >
              {tf}
            </button>
          ))}
        </div>
      </div>

      <div className="flex">
        <MarketWatch />
        <ChartArea />
      </div>

      <Terminal />

      <section className="flex h-6 items-center pt-px">
        <div className="flex w-3 shrink-0 flex-col items-center gap-0.5">
          <button type="button" aria-label="Strategy Tester schließen">
            <X className="size-[7px]" strokeWidth={5} />
          </button>
          <span className="h-1.5 w-1 border-x border-dotted border-[#a0a0a0]" />
        </div>
        <div className="mr-[3px] flex h-[18px] flex-1 items-center gap-1 border-t border-l border-[#a0a0a0] bg-white pl-1">
          <span className="size-1.5 rounded-full border border-[#777] bg-[#b5b5b5]" />
          <h2>Strategy Tester</h2>
        </div>
      </section>

      <footer className="flex flex-1 items-center border-t border-b border-t-[#b8b8b8] border-b-[#444]">
        <span className="flex-1 pl-px">Für Hilfe F1 drücken</span>
        <span className="w-[90px] border-l border-[#a5a5a5] pl-1">Xm</span>
        <span className="h-3 w-20 border-l border-[#a5a5a5]" />
        <span className="h-3 w-[55px] border-l border-[#a5a5a5]" />
        <span className="h-3 w-[55px] border-l border-[#a5a5a5]" />
        <span className="h-3 w-[54px] border-l border-[#a5a5a5]" />
        <span className="h-3 w-[55px] border-l border-[#a5a5a5]" />
        <span className="h-3 w-[51px] border-l border-[#a5a5a5]" />
        <span className="flex w-[102px] items-center gap-1 border-l border-[#a5a5a5] pl-1">
          <svg viewBox="0 0 18 11" className="h-[11px] w-[18px]" aria-hidden="true">
            <path d="M0 0h18v4L0 9z" fill="#6d8f2a" />
            <path d="M0 9 18 4v7H0z" fill="#b8321c" />
            <path d="M0 5.500h18" stroke="#f0f0f0" strokeWidth="11" strokeDasharray=".6 1.400" />
            <path d="M0 8.500 18 3.500" stroke="#f4e8c8" />
          </svg>
          9937/13 kb
        </span>
      </footer>

      <SpecificationDialog />
    </div>
  );
}
